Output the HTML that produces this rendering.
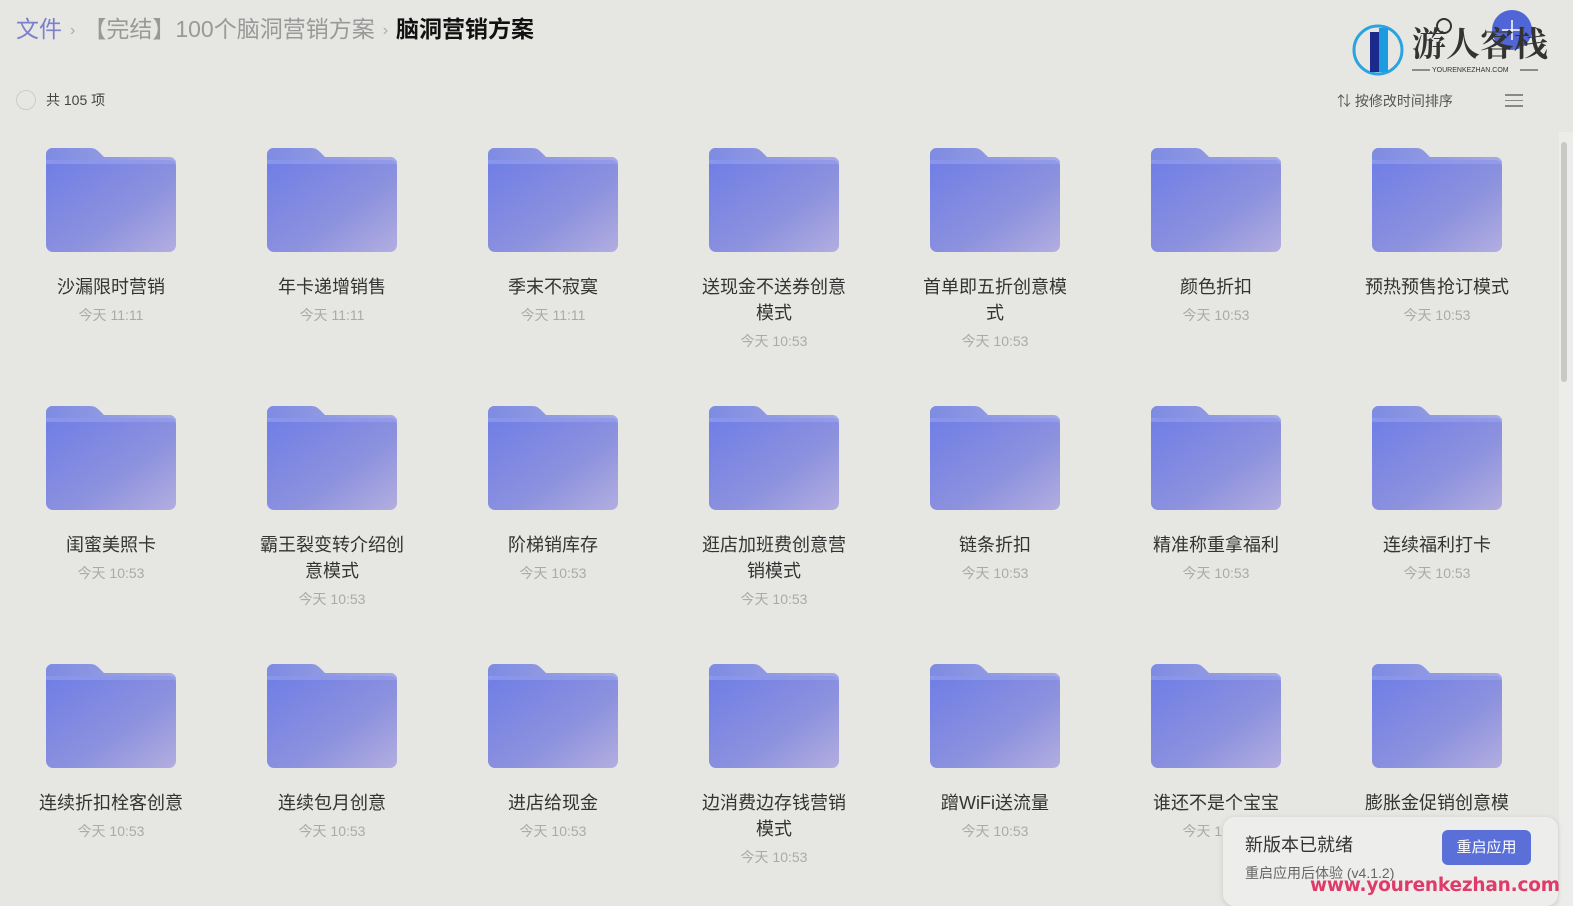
<!DOCTYPE html>
<html><head><meta charset="utf-8"><style>
*{margin:0;padding:0;box-sizing:border-box}
body{width:1573px;height:906px;background:#e6e6e2;font-family:"Liberation Sans","Noto Sans CJK SC",sans-serif;position:relative;overflow:hidden;color:#333}
.bc{position:absolute;left:16px;top:10px;font-size:23px;white-space:nowrap}
.bc .a{color:#7b80c8}.bc .s{color:#aaa;font-size:16px;margin:0 8px;vertical-align:2px}.bc .b{color:#999}.bc .c{color:#111;font-weight:bold}
.cnt{position:absolute;left:16px;top:90px;font-size:14px;color:#444;display:flex;align-items:center}
.cnt i{width:20px;height:20px;border:1.5px solid #ccc;border-radius:50%;margin-right:10px}
.sort{position:absolute;left:1337px;top:91px;font-size:14px;color:#555}
.menu{position:absolute;left:1505px;top:94px;width:18px}
.menu b{display:block;height:1.5px;background:#888;margin-bottom:4px}
.it{position:absolute;width:200px;text-align:center}
.it svg{display:block;margin:0 auto}
.n{font-size:18px;color:#333;line-height:26px;margin-top:20px;padding:0 28px}
.t{font-size:14px;color:#aaa;line-height:22px;margin-top:4px}
.sb{position:absolute;left:1559px;top:132px;width:14px;height:774px;background:#ececea}
.sb i{position:absolute;left:2px;top:10px;width:6px;height:240px;background:#c8c8c6;border-radius:3px}
.toast{position:absolute;left:1223px;top:817px;width:335px;height:89px;background:#ededeb;border-radius:12px;box-shadow:0 1px 6px rgba(0,0,0,.12)}
.toast .h{position:absolute;left:22px;top:14px;font-size:18px;color:#333}
.toast .d{position:absolute;left:22px;top:46px;font-size:14px;color:#666}
.toast .btn{position:absolute;left:219px;top:13px;width:89px;height:35px;background:#5a6fd8;border-radius:6px;color:#fff;font-size:15px;text-align:center;line-height:35px}
.wm{position:absolute;left:1310px;top:875px;font-size:18.5px;letter-spacing:-0.2px;font-weight:bold;color:#e03a6a;font-family:"DejaVu Sans","Liberation Sans",sans-serif;white-space:nowrap}
</style></head><body>
<svg width="0" height="0" style="position:absolute"><defs>
<linearGradient id="g1" x1="0" y1="0" x2="1" y2="1"><stop offset="0" stop-color="#6f7ee6"/><stop offset=".6" stop-color="#8d92de"/><stop offset="1" stop-color="#b3aee0"/></linearGradient>
<linearGradient id="g2" x1="0" y1="0" x2="1" y2="0"><stop offset="0" stop-color="#7d8be2"/><stop offset="1" stop-color="#a7aae2"/></linearGradient>
<symbol id="f" viewBox="0 0 130 106"><path d="M6 0h38c5 0 7 2 10 5l4 4h66c3 0 6 3 6 6v20H0V6c0-3 3-6 6-6z" fill="url(#g2)"/><rect x="0" y="12" width="130" height="92" rx="7" fill="url(#g1)"/><rect x="0" y="12" width="130" height="4" rx="2" fill="#9aa4ec" opacity=".6"/></symbol>
</defs></svg>
<div class="bc"><span class="a">文件</span><span class="s">›</span><span class="b">【完结】100个脑洞营销方案</span><span class="s">›</span><span class="c">脑洞营销方案</span></div>
<div class="cnt"><i></i>共 105 项</div>
<svg style="position:absolute;left:1352px;top:8px" width="200" height="70">
<circle cx="26" cy="42" r="24" fill="none" stroke="#2aa3e0" stroke-width="3"/>
<rect x="18" y="24" width="9" height="40" fill="#1b2a8c"/><rect x="27" y="20" width="9" height="44" fill="#1d9be0"/>
<circle cx="160" cy="22" r="20" fill="#5066d6"/><path d="M160 12v20M150 22h20" stroke="#fff" stroke-width="1.5"/>
<text x="60" y="48" font-size="34" font-weight="bold" fill="#333" font-family="Noto Serif CJK SC,serif">游人客栈</text>
<circle cx="92" cy="18" r="7" fill="none" stroke="#333" stroke-width="2"/>
<line x1="60" y1="62" x2="78" y2="62" stroke="#333"/><text x="80" y="64" font-size="7" fill="#333">YOURENKEZHAN.COM</text><line x1="168" y1="62" x2="186" y2="62" stroke="#333"/>
</svg>
<div class="sort">⇅ 按修改时间排序</div>
<div class="menu"><b></b><b></b><b></b></div>
<div class="sb"><i></i></div>

<div class="it" style="left:11px;top:148px"><svg width="130" height="106"><use href="#f"/></svg><div class="n">沙漏限时营销</div><div class="t">今天 11:11</div></div>
<div class="it" style="left:232px;top:148px"><svg width="130" height="106"><use href="#f"/></svg><div class="n">年卡递增销售</div><div class="t">今天 11:11</div></div>
<div class="it" style="left:453px;top:148px"><svg width="130" height="106"><use href="#f"/></svg><div class="n">季末不寂寞</div><div class="t">今天 11:11</div></div>
<div class="it" style="left:674px;top:148px"><svg width="130" height="106"><use href="#f"/></svg><div class="n">送现金不送券创意模式</div><div class="t">今天 10:53</div></div>
<div class="it" style="left:895px;top:148px"><svg width="130" height="106"><use href="#f"/></svg><div class="n">首单即五折创意模式</div><div class="t">今天 10:53</div></div>
<div class="it" style="left:1116px;top:148px"><svg width="130" height="106"><use href="#f"/></svg><div class="n">颜色折扣</div><div class="t">今天 10:53</div></div>
<div class="it" style="left:1337px;top:148px"><svg width="130" height="106"><use href="#f"/></svg><div class="n">预热预售抢订模式</div><div class="t">今天 10:53</div></div>

<div class="it" style="left:11px;top:406px"><svg width="130" height="106"><use href="#f"/></svg><div class="n">闺蜜美照卡</div><div class="t">今天 10:53</div></div>
<div class="it" style="left:232px;top:406px"><svg width="130" height="106"><use href="#f"/></svg><div class="n">霸王裂变转介绍创意模式</div><div class="t">今天 10:53</div></div>
<div class="it" style="left:453px;top:406px"><svg width="130" height="106"><use href="#f"/></svg><div class="n">阶梯销库存</div><div class="t">今天 10:53</div></div>
<div class="it" style="left:674px;top:406px"><svg width="130" height="106"><use href="#f"/></svg><div class="n">逛店加班费创意营销模式</div><div class="t">今天 10:53</div></div>
<div class="it" style="left:895px;top:406px"><svg width="130" height="106"><use href="#f"/></svg><div class="n">链条折扣</div><div class="t">今天 10:53</div></div>
<div class="it" style="left:1116px;top:406px"><svg width="130" height="106"><use href="#f"/></svg><div class="n">精准称重拿福利</div><div class="t">今天 10:53</div></div>
<div class="it" style="left:1337px;top:406px"><svg width="130" height="106"><use href="#f"/></svg><div class="n">连续福利打卡</div><div class="t">今天 10:53</div></div>

<div class="it" style="left:11px;top:664px"><svg width="130" height="106"><use href="#f"/></svg><div class="n">连续折扣栓客创意</div><div class="t">今天 10:53</div></div>
<div class="it" style="left:232px;top:664px"><svg width="130" height="106"><use href="#f"/></svg><div class="n">连续包月创意</div><div class="t">今天 10:53</div></div>
<div class="it" style="left:453px;top:664px"><svg width="130" height="106"><use href="#f"/></svg><div class="n">进店给现金</div><div class="t">今天 10:53</div></div>
<div class="it" style="left:674px;top:664px"><svg width="130" height="106"><use href="#f"/></svg><div class="n">边消费边存钱营销模式</div><div class="t">今天 10:53</div></div>
<div class="it" style="left:895px;top:664px"><svg width="130" height="106"><use href="#f"/></svg><div class="n">蹭WiFi送流量</div><div class="t">今天 10:53</div></div>
<div class="it" style="left:1116px;top:664px"><svg width="130" height="106"><use href="#f"/></svg><div class="n">谁还不是个宝宝</div><div class="t">今天 10:53</div></div>
<div class="it" style="left:1337px;top:664px"><svg width="130" height="106"><use href="#f"/></svg><div class="n" style="white-space:nowrap;padding:0">膨胀金促销创意模</div></div>

<div class="toast"><div class="h">新版本已就绪</div><div class="d">重启应用后体验 (v4.1.2)</div><div class="btn">重启应用</div></div>
<div class="wm">www.yourenkezhan.com</div>
</body></html>
